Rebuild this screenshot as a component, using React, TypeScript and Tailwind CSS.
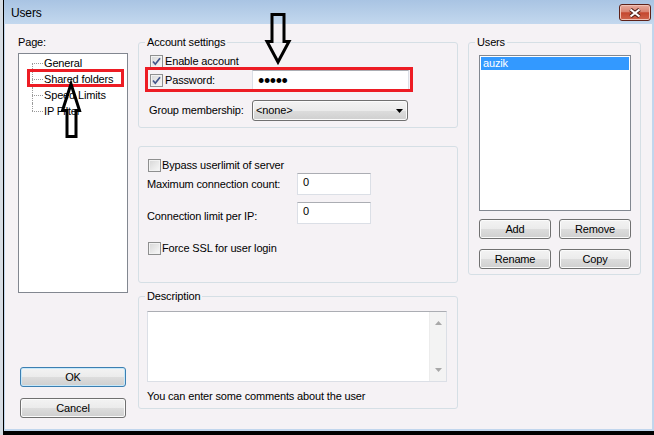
import clsx from "clsx";
import type { ReactNode } from "react";

const TREE = ["General", "Shared folders", "Speed Limits", "IP Filter"];

function Check({ checked = false }: { checked?: boolean }) {
  return (
    <span className="flex h-[13px] w-[13px] shrink-0 items-center justify-center border border-[#8e8f8f] bg-[linear-gradient(135deg,#d6d6d6,#f9f9f9)] shadow-[inset_0_0_0_1px_#f2f2f2]">
      {checked && (
        <svg width="11" height="11" viewBox="0 0 11 11">
          <path d="M2 5.5 L4.3 8.2 L9 2.2" fill="none" stroke="#43568a" strokeWidth="1.7" />
        </svg>
      )}
    </span>
  );
}

function Btn({ children, focused, className }: { children: ReactNode; focused?: boolean; className?: string }) {
  return (
    <div
      className={clsx(
        "flex h-[20px] items-center justify-center rounded-[3px] border bg-[linear-gradient(#f3f3f3_0%,#ebebeb_50%,#dddddd_50%,#cfcfcf_100%)]",
        focused
          ? "border-[#3c7fb1] shadow-[inset_0_0_0_1px_#c6e8fa]"
          : "border-[#707070] shadow-[inset_0_0_0_1px_#fbfbfb]",
        className,
      )}
    >
      {children}
    </div>
  );
}

function TextBox({ children, className }: { children?: ReactNode; className?: string }) {
  return (
    <div className={clsx("border border-[#dbdfe6] border-t-[#abadb3] bg-white", className)}>{children}</div>
  );
}

function Group({ legend, className, children }: { legend?: string; className?: string; children: ReactNode }) {
  return (
    <fieldset className={clsx("rounded-[3px] border border-[#d5dfe5]", className)}>
      {legend && <legend className="ml-[6px] px-[2px] leading-[13px]">{legend}</legend>}
      {children}
    </fieldset>
  );
}

export default function App() {
  return (
    <div className="relative flex h-[435px] w-[654px] overflow-hidden bg-[#d6dce3] font-['Liberation_Sans',Arial,sans-serif] text-[11px] leading-[13px] tracking-[-0.15px] text-black">
      <div className="ml-[3px] flex flex-1 flex-col border-b-4 border-l border-black bg-[#c1d6ed] pb-[2px] pl-px pr-[2px]">
        {/* title bar */}
        <div className="-ml-px -mr-[2px] flex h-[24px] shrink-0 justify-between bg-[linear-gradient(#a9c4e3,#c3d8ee)] pl-[7px] pr-[3px]">
          <span className="mt-[6px] text-[12px] leading-[14px]">Users</span>
          <div className="mt-[4px] flex h-[17px] w-[32px] items-center justify-center rounded-[3px] border border-[#5e2219] bg-[linear-gradient(#e8ab9d_0%,#d98472_45%,#c4472f_52%,#cf664e_100%)] shadow-[inset_0_0_0_1px_#f0c2b6]">
            <svg width="14" height="10" viewBox="0 0 14 10">
              <path d="M2.5 1.5 L11.5 8.5 M11.5 1.5 L2.5 8.5" stroke="#4a1c14" strokeWidth="4" />
              <path d="M2.5 1.5 L11.5 8.5 M11.5 1.5 L2.5 8.5" stroke="#fff" strokeWidth="2.2" />
            </svg>
          </div>
        </div>

        {/* dialog body */}
        <div className="flex flex-1 gap-[10px] bg-[#f5f2f5] pl-[13px] pt-[12px]">
          {/* left: pages */}
          <div className="flex w-[110px] flex-col">
            <div className="h-[13px]">Page:</div>
            <div className="mt-[4px] h-[240px] border border-[#828790] bg-white pt-px">
              {TREE.map((label, i) => (
                <div key={label} className="flex h-[16px] items-center">
                  <span className="ml-[13px] flex h-full w-[11px] flex-col">
                    <span className={clsx("h-[8px] border-dotted border-[#9a9a9a]", i > 0 && "border-l")} />
                    <span
                      className={clsx(
                        "h-[8px] border-t border-dotted border-[#9a9a9a]",
                        i < TREE.length - 1 && "border-l",
                      )}
                    />
                  </span>
                  <span className="ml-px">{label}</span>
                </div>
              ))}
            </div>
            <Btn focused className="mx-[2px] mt-[74px]">
              OK
            </Btn>
            <Btn className="mx-[2px] mt-[11px]">Cancel</Btn>
          </div>

          {/* middle: settings */}
          <div className="flex w-[320px] flex-col">
            <Group legend="Account settings">
              <div className="pb-[6px] pl-[11px]">
                <div className="mt-[6px] flex h-[13px] items-center gap-[2px]">
                  <Check checked />
                  Enable account
                </div>
                <div className="mt-[2px] flex h-[21px] items-center">
                  <div className="flex w-[102px] items-center gap-[2px]">
                    <Check checked />
                    Password:
                  </div>
                  <TextBox className="flex h-[21px] w-[157px] items-center pl-[5px]">
                    <span className="text-[18px] leading-none tracking-[-0.4px]">•••••</span>
                  </TextBox>
                </div>
                <div className="mt-[9px] flex h-[21px] items-center">
                  <div className="-ml-px w-[103px]">Group membership:</div>
                  <div className="flex h-[21px] w-[156px] items-center justify-between rounded-[3px] border border-[#707070] bg-[linear-gradient(#f3f3f3_0%,#ebebeb_50%,#dddddd_50%,#cfcfcf_100%)] pl-[3px] pr-[4px] shadow-[inset_0_0_0_1px_#fbfbfb]">
                    <span>&lt;none&gt;</span>
                    <svg width="7" height="4" viewBox="0 0 7 4">
                      <path d="M0 0 H7 L3.5 4 Z" fill="#000" />
                    </svg>
                  </div>
                </div>
              </div>
            </Group>

            <Group className="mt-[18px]">
              <div className="pb-[27px] pl-[9px] pt-[12px]">
                <div className="flex h-[13px] items-center gap-[1px]">
                  <Check />
                  Bypass userlimit of server
                </div>
                <div className="mt-px flex h-[22px] items-center">
                  <div className="-ml-px w-[150px]">Maximum connection count:</div>
                  <TextBox className="h-[22px] w-[74px] pl-[5px] pt-[2px]">0</TextBox>
                </div>
                <div className="mt-[7px] flex h-[22px] items-start">
                  <div className="-ml-px w-[150px] pt-[8px]">Connection limit per IP:</div>
                  <TextBox className="h-[22px] w-[74px] pl-[5px] pt-[2px]">0</TextBox>
                </div>
                <div className="mt-[18px] flex h-[13px] items-center gap-[1px]">
                  <Check />
                  Force SSL for user login
                </div>
              </div>
            </Group>

            <Group legend="Description" className="mt-[7px]">
              <div className="pb-[5px] pl-[8px]">
                <TextBox className="mt-[8px] flex h-[71px] w-[300px] justify-end">
                  <div className="flex w-[17px] flex-col items-center justify-between border-l border-[#ececec] bg-[#f3f3f3] py-[9px]">
                    <svg width="7" height="4" viewBox="0 0 7 4">
                      <path d="M0 4 H7 L3.5 0 Z" fill="#a8a8a8" />
                    </svg>
                    <svg width="7" height="4" viewBox="0 0 7 4">
                      <path d="M0 0 H7 L3.5 4 Z" fill="#a8a8a8" />
                    </svg>
                  </div>
                </TextBox>
                <div className="mt-[8px]">You can enter some comments about the user</div>
              </div>
            </Group>
          </div>

          {/* right: users */}
          <div className="w-[173px]">
            <Group legend="Users">
              <div className="pb-[5px] pl-[10px]">
                <div className="mt-[6px] h-[156px] w-[152px] border border-[#828790] bg-white p-px">
                  <div className="h-[13px] bg-[#3399ff] pl-[2px] text-white">auzik</div>
                </div>
                <div className="mt-[8px] flex gap-[8px]">
                  <Btn className="w-[72px]">Add</Btn>
                  <Btn className="w-[72px]">Remove</Btn>
                </div>
                <div className="mt-[10px] flex gap-[8px]">
                  <Btn className="w-[72px]">Rename</Btn>
                  <Btn className="w-[72px]">Copy</Btn>
                </div>
              </div>
            </Group>
          </div>
        </div>
      </div>

      {/* annotations drawn over the dialog */}
      <svg className="pointer-events-none absolute left-0 top-0" width="654" height="435">
        <rect x="28.5" y="70.5" width="94" height="15" fill="none" stroke="#ed1c24" strokeWidth="3" />
        <rect x="146.5" y="68.5" width="265" height="22" fill="none" stroke="#ed1c24" strokeWidth="3" />
        <polygon
          points="71,84 79.5,110.5 76,110.5 76,136.5 67,136.5 67,110.5 62.5,110.5"
          fill="none"
          stroke="#000"
          strokeWidth="3"
          strokeLinejoin="miter"
        />
        <polygon
          points="272,14.5 284,14.5 284,41.5 289,41.5 278,62 267,41.5 272,41.5"
          fill="none"
          stroke="#000"
          strokeWidth="3"
          strokeLinejoin="miter"
        />
      </svg>
    </div>
  );
}
